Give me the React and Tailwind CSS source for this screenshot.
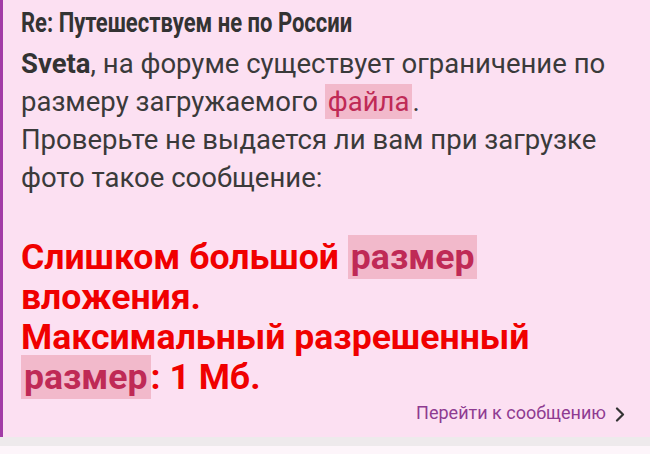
function Mark({ children }) {
  return <span className="bg-[#f2b9cb] px-[3px] py-px text-[#bf2a56]">{children}</span>;
}

export default function App() {
  return (
    <div className="h-[454px] w-[650px] overflow-hidden bg-[#fdf5fa] font-['Roboto',sans-serif]">
      <div className="flex h-[437px] flex-col border-l-[3px] border-[#a23ba6] bg-[#fce0f2] pl-[18px] pr-3 pt-2">
        <h2 className="origin-left scale-x-[0.815] whitespace-nowrap text-[27px] font-bold leading-[30px] text-[#333333]">
          Re: Путешествуем не по России
        </h2>
        <div className="mt-[7px] text-[27.5px] leading-[38px] text-[#3a3a3a]">
          <b className="font-bold text-[#333333]">Sveta</b>, на форуме существует ограничение по размеру загружаемого{' '}
          <Mark>файла</Mark>.
          <br />
          Проверьте не выдается ли вам при загрузке фото такое сообщение:
        </div>
        <div className="mt-10 text-[35.6px] font-bold leading-[40px] text-[#f00000]">
          Слишком большой <Mark>размер</Mark> вложения.
          <br />
          Максимальный разрешенный <Mark>размер</Mark>: 1 Мб.
        </div>
        <div className="mt-1 flex items-center justify-end gap-[9px] pr-[13px] text-[18px] leading-6 text-[#8e3b91]">
          <span>Перейти к сообщению</span>
          <svg width="10" height="15" viewBox="0 0 10 15" fill="none" className="mt-0.5">
            <path d="M2 1.5 L8 7.5 L2 13.5" stroke="#333333" strokeWidth="2.2" strokeLinecap="round" strokeLinejoin="round" />
          </svg>
        </div>
      </div>
      <div className="h-[9px] bg-[#eeeaec]" />
    </div>
  );
}
